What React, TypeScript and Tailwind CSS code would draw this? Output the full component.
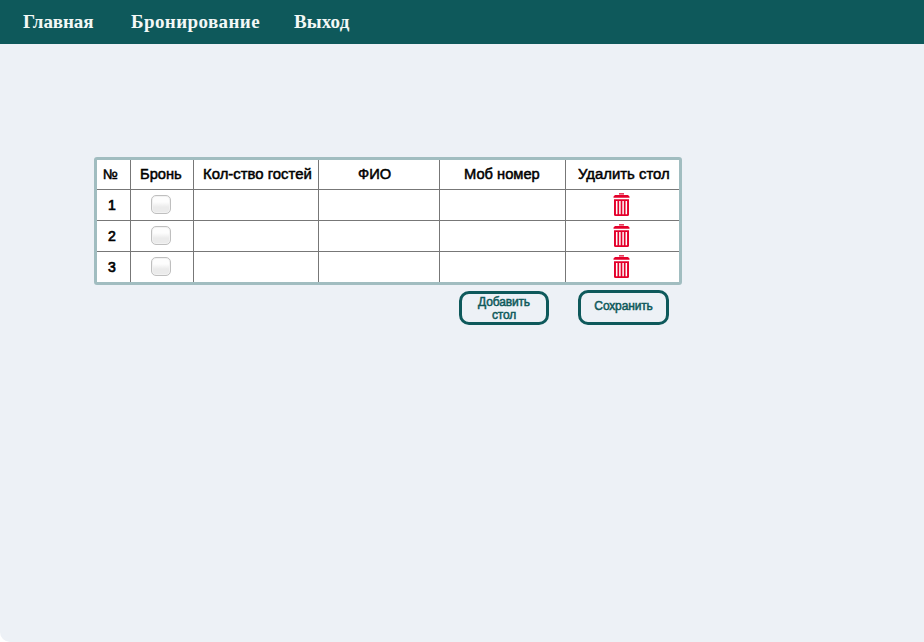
import React from 'react';

const columns = [
  { label: '№', pad: 'pl-[6px] text-[14px]' },
  { label: 'Бронь', pad: 'pl-[9px] text-[14.7px]' },
  { label: 'Кол-ство гостей', pad: 'pl-[9px] text-[14.9px]' },
  { label: 'ФИО', pad: 'pl-[39px] text-[14.7px]' },
  { label: 'Моб номер', pad: 'pl-[24px] text-[14.7px]' },
  { label: 'Удалить стол', pad: 'pl-[12px] text-[14.9px]' },
];

const grid = 'grid grid-cols-[34px_63px_125px_121px_126px_113px]';
const cell = 'border-r border-[#777] last:border-r-0';

function TrashIcon() {
  return (
    <svg width="17" height="24" viewBox="0 0 17 24" fill="none" className="block" aria-hidden="true">
      <path d="M6 .3h5v1.2H6zM2 2h13l1.5 1.5v1.3H.5V3.5z" fill="#e4002b" />
      <path d="M1 6.2h15v15.3q0 1.5-1.500 1.500h-12Q1 23 1 21.500z" fill="#e4002b" />
      <path d="M3.700 8v13.200M6.900 8v13.200M10.100 8v13.200M13.300 8v13.200" stroke="#fff" strokeWidth="1.500" />
    </svg>
  );
}

function Checkbox() {
  return (
    <button
      type="button"
      role="checkbox"
      aria-checked="false"
      aria-label="Бронь"
      className="block h-[19px] w-[20px] rounded-[5px] border border-[#bfbfbf] bg-linear-to-b from-[#fdfdfd] from-35% to-[#ebebeb] to-65% shadow-[inset_0_0_0_1px_#f2f2f2]"
    />
  );
}

export default function App() {
  return (
    <div className="h-[642px] w-[924px] overflow-hidden bg-white font-['Liberation_Sans',Arial,sans-serif]">
      <div className="h-full rounded-bl-[10px] bg-[#edf1f6]">
        <nav className="flex h-[44px] bg-[#0e595b] pl-[23px] pt-[9px] font-['Liberation_Serif',serif] text-[19px] leading-[25px] font-bold text-[#f3f8f6]">
          <a className="w-[108px] tracking-[-0.1px]">Главная</a>
          <a className="w-[163px] tracking-[0.4px]">Бронирование</a>
          <a className="tracking-[0.1px]">Выход</a>
        </nav>
        <main className="ml-[94px] mt-[113px] w-[588px]">
          <div className="rounded-[3px] border-3 border-[#a1bdc0] bg-white text-black">
            <div className={grid + ' h-[30px] border-b border-[#777]'}>
              {columns.map((c) => (
                <div
                  key={c.label}
                  className={`${cell} ${c.pad} whitespace-nowrap leading-[28px] [-webkit-text-stroke:0.5px_black]`}
                >
                  {c.label}
                </div>
              ))}
            </div>
            {[1, 2, 3].map((n) => (
              <div key={n} className={grid + ' h-[31px] border-b border-[#777] last:h-[30px] last:border-b-0'}>
                <div className={cell + ' pl-[11px] text-[14px] leading-[30px] [-webkit-text-stroke:0.7px_black]'}>{n}</div>
                <div className={cell + ' pl-[20px] pt-[5px]'}>
                  <Checkbox />
                </div>
                <div className={cell} />
                <div className={cell} />
                <div className={cell} />
                <div className={cell + ' pl-[47px] pt-[3px]'}>
                  <TrashIcon />
                </div>
              </div>
            ))}
          </div>
          <div className="flex justify-end gap-[29px] pr-[13px] pt-[5px] text-[12px] leading-[13px] tracking-[-0.15px] text-[#0e595b]">
            <button className="mt-px h-[34px] w-[90px] rounded-[10px] border-3 border-[#0e595b] pt-px [-webkit-text-stroke:0.5px_#0e595b]">
              <span className="block">Добавить</span>
              <span className="block">стол</span>
            </button>
            <button className="h-[35px] w-[91px] rounded-[10px] border-3 border-[#0e595b] pb-[2px] [-webkit-text-stroke:0.5px_#0e595b]">
              Сохранить
            </button>
          </div>
        </main>
      </div>
    </div>
  );
}
